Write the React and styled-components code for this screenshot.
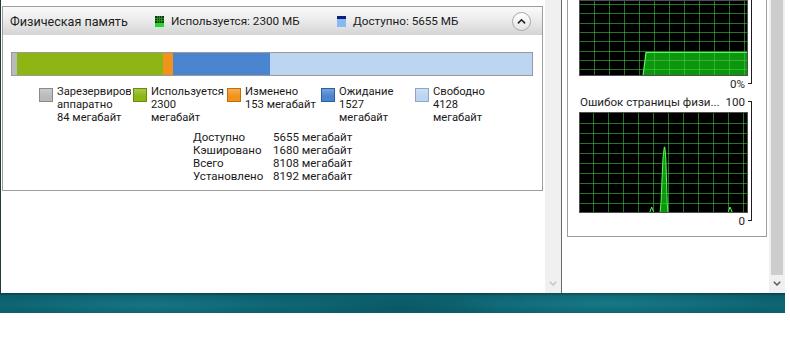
import React from "react";
import styled, { createGlobalStyle } from "styled-components";

const GlobalStyle = createGlobalStyle`
  html, body { margin: 0; padding: 0; background: #fff; }
  body { font-family: Roboto, "Noto Sans", sans-serif; color: #1a1a1a; }
`;

const memory = [
  { key: "hw", color: "#bababa", edge: "#8a8a8a", value: 84, lines: ["Зарезервировано", "аппаратно", "84 мегабайт"] },
  { key: "used", color: "#8db515", edge: "#6a8c06", value: 2300, lines: ["Используется", "2300", "мегабайт"] },
  { key: "mod", color: "#f1931a", edge: "#c06e08", value: 153, lines: ["Изменено", "153 мегабайт"] },
  { key: "stb", color: "#4b84cf", edge: "#2d5f9f", value: 1527, lines: ["Ожидание", "1527", "мегабайт"] },
  { key: "free", color: "#bcd5f0", edge: "#8aa6c8", value: 4128, lines: ["Свободно", "4128", "мегабайт"] },
];

const stats = [
  ["Доступно", "5655 мегабайт"],
  ["Кэшировано", "1680 мегабайт"],
  ["Всего", "8108 мегабайт"],
  ["Установлено", "8192 мегабайт"],
];

const Screen = styled.div`
  width: 790px;
  height: 350px;
  background: #fff;
  overflow: hidden;
`;

const Window = styled.div`
  display: flex;
  width: 785px;
  height: 293px;
`;

const LeftPane = styled.div`
  display: flex;
  width: 562px;
  box-sizing: border-box;
  border-left: 1px solid #24393d;
  border-right: 1px solid #6a6a6a;
`;

const RightPane = styled.div`
  display: flex;
  flex: 1;
`;

const PaneBody = styled.div`
  flex: 1;
  overflow: hidden;
`;

const Scrollbar = styled.div`
  width: 16px;
  display: flex;
  flex-direction: column;
  background: #f0f0f0;
`;

const Thumb = styled.div`
  margin: 0 2px;
  height: 275px;
  background: #cdcdcd;
`;

const ScrollArrow = styled.div`
  margin-top: auto;
  height: 18px;
  display: flex;
  align-items: center;
  justify-content: center;
`;

const GroupBox = styled.div`
  margin: 6px 0 0 1px;
  width: 541px;
  height: 185px;
  box-sizing: border-box;
  border: 1px solid #9d9d9d;
`;

const Header = styled.div`
  height: 28px;
  display: flex;
  align-items: center;
  padding: 0 11px 0 7px;
  background: linear-gradient(#fafafa, #ececec 45%, #d4d4d4);
  font-size: 11.7px;
`;

const Title = styled.div`
  width: 145px;
  font-size: 12.6px;
  color: #1e1e1e;
`;

const HeaderStat = styled.div`
  width: ${({ $w }) => $w}px;
  display: flex;
  align-items: center;
  gap: 7px;
`;

const CollapseButton = styled.div`
  margin-left: auto;
  width: 17px;
  height: 17px;
  border-radius: 50%;
  border: 1px solid #a9a9a9;
  background: linear-gradient(#ffffff, #e4e4e4);
  display: flex;
  align-items: center;
  justify-content: center;
`;

const Bar = styled.div`
  margin: 17px 0 0 8px;
  width: 522px;
  height: 24px;
  box-sizing: border-box;
  border: 1px solid #9a9a9a;
  display: flex;
`;

const Segment = styled.div`
  height: 100%;
  background: ${({ $c }) => $c};
`;

const Legend = styled.div`
  display: flex;
  margin-top: 9px;
  padding-left: 36px;
`;

const LegendItem = styled.div`
  width: 94px;
  display: flex;
  gap: 4px;
`;

const Swatch = styled.div`
  margin-top: 3px;
  width: 14px;
  height: 14px;
  flex: none;
  box-sizing: border-box;
  border: 1px solid ${({ $edge }) => $edge};
  background: linear-gradient(rgba(255,255,255,0.25), rgba(255,255,255,0) 60%), ${({ $c }) => $c};
`;

const LegendText = styled.div`
  width: 74px;
  overflow: hidden;
  font-size: 11.2px;
  line-height: 13px;
  white-space: nowrap;
`;

const Stats = styled.div`
  display: grid;
  grid-template-columns: 80px auto;
  margin: 7px 0 0 190px;
  font-size: 11.5px;
  line-height: 13px;
`;

const GraphBox = styled.div`
  margin-left: 5px;
  width: 200px;
  height: 237px;
  box-sizing: border-box;
  border: 1px solid #9d9d9d;
  border-top: none;
  padding-left: 11px;
`;

const GraphBlock = styled.div`
  display: flex;
  margin-bottom: ${({ $mb }) => $mb || 0}px;
`;

const GraphColumn = styled.div`
  width: 169px;
  display: flex;
  flex-direction: column;
`;

const ScaleLabel = styled.div`
  height: 15px;
  display: flex;
  align-items: center;
  justify-content: ${({ $split }) => ($split ? "space-between" : "flex-end")};
  padding: 0 3px 0 1px;
  font-size: 11.6px;
  color: #1e1e1e;
  white-space: nowrap;
`;

const GraphGap = styled.div`
  height: 3px;
`;

const Bracket = styled.div`
  width: 4px;
  box-sizing: border-box;
  margin: ${({ $top }) => $top}px 0 7px;
  border-right: 1px solid #1e1e1e;
  border-top: ${({ $top }) => ($top ? "1px solid #1e1e1e" : "none")};
  border-bottom: 1px solid #1e1e1e;
`;

const Taskbar = styled.div`
  width: 785px;
  height: 20px;
  background:
    radial-gradient(ellipse 140px 14px at 150px 12px, rgba(40,150,165,0.3), transparent),
    radial-gradient(ellipse 160px 16px at 610px 10px, rgba(40,155,170,0.35), transparent),
    radial-gradient(ellipse 100px 12px at 400px 14px, rgba(5,60,70,0.3), transparent),
    linear-gradient(#063f4a, #0c5f6d 3px, #0e6674 60%, #0c5e6b);
`;

const Chevron = ({ up, color = "#333", size = 8 }) => (
  <svg width={size} height={size * 0.7} viewBox="0 0 10 7">
    <path d={up ? "M1 6 L5 2 L9 6" : "M1 1 L5 5 L9 1"} fill="none" stroke={color} strokeWidth="1.8" />
  </svg>
);

const MiniIcon = ({ top, bottom, split, grid }) => (
  <svg width="9" height="11" viewBox="0 0 9 11">
    <rect x="0" y="0" width="9" height="11" fill={top} />
    {grid && [2, 4, 6].map((x) => <line key={x} x1={x + 0.5} y1="0" x2={x + 0.5} y2={split} stroke="#2a8a2a" strokeWidth="1" />)}
    {grid && [2, 4].map((y) => <line key={y} x1="0" y1={y + 0.5} x2="9" y2={y + 0.5} stroke="#2a8a2a" strokeWidth="1" />)}
    <rect x="0" y={split} width="9" height={11 - split} fill={bottom} />
  </svg>
);

const Graph = ({ width, height, xOff, yOff, yStep, children }) => {
  const vx = [];
  for (let x = xOff; x < width; x += 15) vx.push(x);
  const hy = [];
  for (let y = yOff; y < height; y += yStep) hy.push(y);
  return (
    <svg width={width} height={height} style={{ display: "block" }}>
      <rect width={width} height={height} fill="#000" />
      {children}
      {vx.map((x) => (
        <line key={"v" + x} x1={x + 0.5} y1="0" x2={x + 0.5} y2={height} stroke="rgba(70,210,70,0.55)" />
      ))}
      {hy.map((y) => (
        <line key={"h" + y} x1="0" y1={Math.round(y) + 0.5} x2={width} y2={Math.round(y) + 0.5} stroke="rgba(70,210,70,0.55)" />
      ))}
      <rect x="0.5" y="0.5" width={width - 1} height={height - 1} fill="none" stroke="#505050" />
    </svg>
  );
};

export default function App() {
  const total = memory.reduce((s, m) => s + m.value, 0);
  return (
    <Screen>
      <GlobalStyle />
      <Window>
        <LeftPane>
          <PaneBody>
            <GroupBox>
              <Header>
                <Title>Физическая память</Title>
                <HeaderStat $w={182}>
                  <MiniIcon top="#0b3a0b" bottom="#25d925" split={7} grid />
                  Используется: 2300 МБ
                </HeaderStat>
                <HeaderStat $w={150}>
                  <MiniIcon top="#0c1f7c" bottom="#8ab9f2" split={3} />
                  Доступно: 5655 МБ
                </HeaderStat>
                <CollapseButton>
                  <Chevron up color="#222" size={9} />
                </CollapseButton>
              </Header>
              <Bar>
                {memory.map((m) => (
                  <Segment key={m.key} $c={m.color} style={{ width: `${(m.value / total) * 100}%` }} />
                ))}
              </Bar>
              <Legend>
                {memory.map((m) => (
                  <LegendItem key={m.key}>
                    <Swatch $c={m.color} $edge={m.edge} />
                    <LegendText>
                      {m.lines.map((l) => (
                        <div key={l}>{l}</div>
                      ))}
                    </LegendText>
                  </LegendItem>
                ))}
              </Legend>
              <Stats>
                {stats.map(([k, v]) => (
                  <React.Fragment key={k}>
                    <span>{k}</span>
                    <span>{v}</span>
                  </React.Fragment>
                ))}
              </Stats>
            </GroupBox>
          </PaneBody>
          <Scrollbar>
            <ScrollArrow>
              <Chevron color="#c4c4c4" />
            </ScrollArrow>
          </Scrollbar>
        </LeftPane>
        <RightPane>
          <PaneBody>
            <GraphBox>
              <GraphBlock $mb={3}>
                <GraphColumn>
                  <Graph width={169} height={76} xOff={15} yOff={4} yStep={9.3}>
                    <polygon points="64,76 67,52 169,52 169,76" fill="#0d960d" />
                    <polyline points="64,76 67,52.5 169,52.5" fill="none" stroke="#55ff55" strokeWidth="1.2" />
                  </Graph>
                  <ScaleLabel>0%</ScaleLabel>
                </GraphColumn>
                <Bracket $top={0} />
              </GraphBlock>
              <GraphBlock>
                <GraphColumn>
                  <ScaleLabel $split>
                    <span>Ошибок страницы физи...</span>
                    <span>100</span>
                  </ScaleLabel>
                  <GraphGap />
                  <Graph width={169} height={101} xOff={14} yOff={11} yStep={10}>
                    <polygon
                      points="81,101 82,91 83,68 84,46 85.3,35 85.8,35 86.8,46 87.5,68 88.2,91 89,101"
                      fill="#0d960d"
                      stroke="#55ff55"
                      strokeWidth="1"
                    />
                    <polygon points="70.5,101 72.7,95 75,101" fill="none" stroke="#55ff55" strokeWidth="1" />
                    <polygon points="149,101 151,95 153.5,101" fill="none" stroke="#55ff55" strokeWidth="1" />
                  </Graph>
                  <ScaleLabel>0</ScaleLabel>
                </GraphColumn>
                <Bracket $top={7} />
              </GraphBlock>
            </GraphBox>
          </PaneBody>
          <Scrollbar>
            <Thumb />
            <ScrollArrow>
              <Chevron color="#555" />
            </ScrollArrow>
          </Scrollbar>
        </RightPane>
      </Window>
      <Taskbar />
    </Screen>
  );
}
